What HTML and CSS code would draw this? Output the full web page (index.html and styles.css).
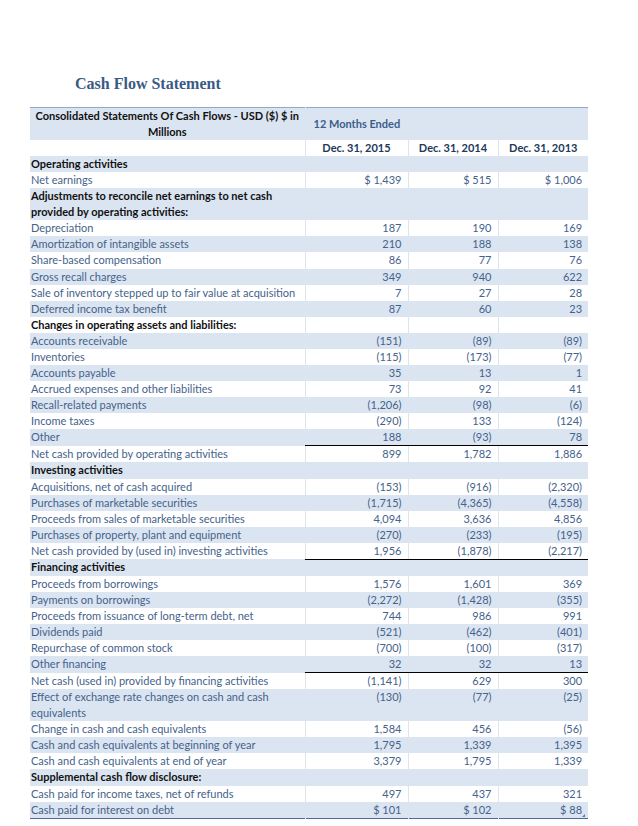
FILE: index.html
```html
<!DOCTYPE html>
<html>
<head>
<meta charset="utf-8">
<link rel="stylesheet" href="styles.css">
</head>
<body>
<div class="page">
  <h1 class="title">Cash Flow Statement</h1>
  <table class="cf">
    <colgroup><col class="c1"><col class="c2"><col class="c3"><col class="c4"></colgroup>
    <tbody>
    <tr class="band h1">
      <th class="lab">Consolidated Statements Of Cash Flows - USD ($) $ in Millions</th>
      <th class="period" colspan="3">12 Months Ended</th>
    </tr>
    <tr class="h2">
      <th></th><th class="date">Dec. 31, 2015</th><th class="date">Dec. 31, 2014</th><th class="date">Dec. 31, 2013</th>
    </tr>
    <tr class="band sec"><td>Operating activities</td><td></td><td></td><td></td></tr>
    <tr><td>Net earnings</td><td>$ 1,439</td><td>$ 515</td><td>$ 1,006</td></tr>
    <tr class="band sec"><td>Adjustments to reconcile net earnings to net cash provided by operating activities:</td><td></td><td></td><td></td></tr>
    <tr><td>Depreciation</td><td>187</td><td>190</td><td>169</td></tr>
    <tr class="band"><td>Amortization of intangible assets</td><td>210</td><td>188</td><td>138</td></tr>
    <tr><td>Share-based compensation</td><td>86</td><td>77</td><td>76</td></tr>
    <tr class="band"><td>Gross recall charges</td><td>349</td><td>940</td><td>622</td></tr>
    <tr><td>Sale of inventory stepped up to fair value at acquisition</td><td>7</td><td>27</td><td>28</td></tr>
    <tr class="band"><td>Deferred income tax benefit</td><td>87</td><td>60</td><td>23</td></tr>
    <tr class="sec"><td>Changes in operating assets and liabilities:</td><td></td><td></td><td></td></tr>
    <tr class="band"><td>Accounts receivable</td><td>(151)</td><td>(89)</td><td>(89)</td></tr>
    <tr><td>Inventories</td><td>(115)</td><td>(173)</td><td>(77)</td></tr>
    <tr class="band"><td>Accounts payable</td><td>35</td><td>13</td><td>1</td></tr>
    <tr><td>Accrued expenses and other liabilities</td><td>73</td><td>92</td><td>41</td></tr>
    <tr class="band"><td>Recall-related payments</td><td>(1,206)</td><td>(98)</td><td>(6)</td></tr>
    <tr><td>Income taxes</td><td>(290)</td><td>133</td><td>(124)</td></tr>
    <tr class="band sum"><td>Other</td><td>188</td><td>(93)</td><td>78</td></tr>
    <tr><td>Net cash provided by operating activities</td><td>899</td><td>1,782</td><td>1,886</td></tr>
    <tr class="band sec"><td>Investing activities</td><td></td><td></td><td></td></tr>
    <tr><td>Acquisitions, net of cash acquired</td><td>(153)</td><td>(916)</td><td>(2,320)</td></tr>
    <tr class="band"><td>Purchases of marketable securities</td><td>(1,715)</td><td>(4,365)</td><td>(4,558)</td></tr>
    <tr><td>Proceeds from sales of marketable securities</td><td>4,094</td><td>3,636</td><td>4,856</td></tr>
    <tr class="band"><td>Purchases of property, plant and equipment</td><td>(270)</td><td>(233)</td><td>(195)</td></tr>
    <tr class="sum"><td>Net cash provided by (used in) investing activities</td><td>1,956</td><td>(1,878)</td><td>(2,217)</td></tr>
    <tr class="band sec"><td>Financing activities</td><td></td><td></td><td></td></tr>
    <tr><td>Proceeds from borrowings</td><td>1,576</td><td>1,601</td><td>369</td></tr>
    <tr class="band"><td>Payments on borrowings</td><td>(2,272)</td><td>(1,428)</td><td>(355)</td></tr>
    <tr><td>Proceeds from issuance of long-term debt, net</td><td>744</td><td>986</td><td>991</td></tr>
    <tr class="band"><td>Dividends paid</td><td>(521)</td><td>(462)</td><td>(401)</td></tr>
    <tr><td>Repurchase of common stock</td><td>(700)</td><td>(100)</td><td>(317)</td></tr>
    <tr class="band sum"><td>Other financing</td><td>32</td><td>32</td><td>13</td></tr>
    <tr><td>Net cash (used in) provided by financing activities</td><td>(1,141)</td><td>629</td><td>300</td></tr>
    <tr class="band"><td>Effect of exchange rate changes on cash and cash equivalents</td><td>(130)</td><td>(77)</td><td>(25)</td></tr>
    <tr><td>Change in cash and cash equivalents</td><td>1,584</td><td>456</td><td>(56)</td></tr>
    <tr class="band"><td>Cash and cash equivalents at beginning of year</td><td>1,795</td><td>1,339</td><td>1,395</td></tr>
    <tr><td>Cash and cash equivalents at end of year</td><td>3,379</td><td>1,795</td><td>1,339</td></tr>
    <tr class="band sec"><td>Supplemental cash flow disclosure:</td><td></td><td></td><td></td></tr>
    <tr><td>Cash paid for income taxes, net of refunds</td><td>497</td><td>437</td><td>321</td></tr>
    <tr class="band last"><td>Cash paid for interest on debt</td><td>$ 101</td><td>$ 102</td><td class="corner">$ 88</td></tr>
    </tbody>
  </table>
</div>
</body>
</html>
```

FILE: styles.css
```css
html, body {
  margin: 0;
  padding: 0;
  background: #ffffff;
}
.page {
  padding: 74px 0 0 30px;
}
.title {
  margin: 0 0 13px 45px;
  font-family: "Liberation Serif", "DejaVu Serif", serif;
  font-weight: bold;
  font-size: 16px;
  line-height: 20px;
  color: #3a5a86;
}
.cf {
  width: 558px;
  table-layout: fixed;
  border-collapse: collapse;
  font-family: Lato, "Liberation Sans", sans-serif;
  font-size: 11px;
  color: #45628b;
  border-top: 1px solid #8fa9c9;
  border-bottom: 1px solid #4d6b9a;
}
.c1 { width: 275px; }
.c2 { width: 103px; }
.c3 { width: 90px; }
.c4 { width: 90px; }
.cf td, .cf th {
  padding: 0 6px 0 1px;
  line-height: 16.08px;
  vertical-align: top;
  border-left: 1px solid #dde4ec;
  background: #ffffff;
}
.cf td:first-child, .cf th:first-child {
  border-left: none;
}
.cf td + td {
  text-align: right;
}
.cf tr.band > td, .cf tr.band > th {
  background: #dbe5f1;
  border-left-color: #dbe5f1;
}
.h1 th {
  height: 32px;
  vertical-align: middle;
  line-height: 16px;
}
.h1 .lab {
  text-align: center;
  color: #111111;
  font-weight: bold;
  padding: 0 4px;
}
.h1 .period {
  text-align: left;
  padding-left: 8px;
  color: #3a5d8c;
  font-weight: bold;
}
.h2 th {
  height: 16px;
  line-height: 16px;
  text-align: center;
  font-weight: bold;
  color: #22385a;
  padding: 0;
}
.sec td:first-child {
  font-weight: bold;
  color: #111111;
}
.sum td + td {
  border-bottom: 1px solid #000000;
}
.corner {
  position: relative;
}
.corner::after {
  content: "";
  position: absolute;
  right: 3px;
  bottom: 1px;
  width: 0;
  height: 0;
  border-left: 3px solid transparent;
  border-bottom: 3px solid #5a7aa6;
}
```
